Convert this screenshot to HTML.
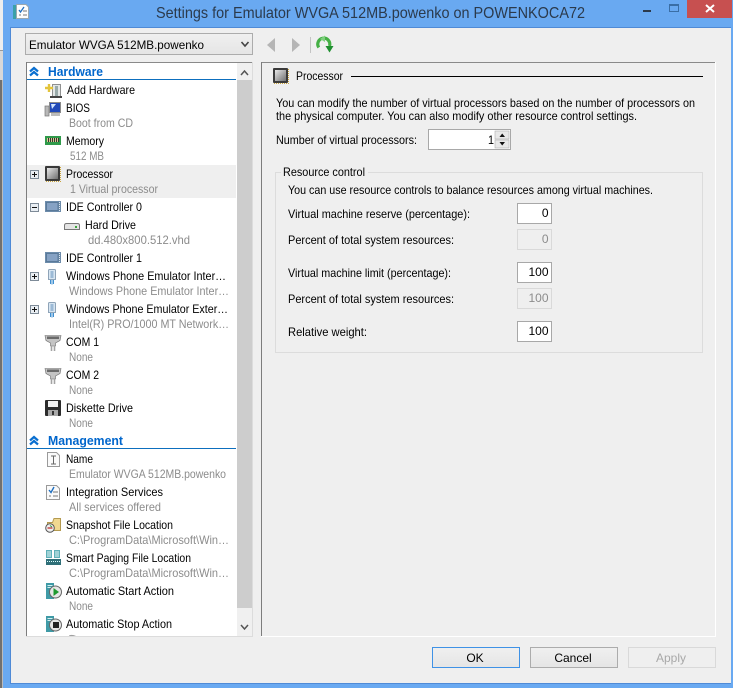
<!DOCTYPE html>
<html><head><meta charset="utf-8"><style>
html,body{margin:0;padding:0;background:#69a9f1;width:733px;height:688px;overflow:hidden}
svg{display:block}
text{font-family:"Liberation Sans",sans-serif;font-size:12px;fill:#000}
.g{fill:#8c8c8c}
.h{font-weight:bold;fill:#0066cc;font-size:12.5px}
.t{font-size:16px;fill:#2b3a4c}
</style></head><body>
<svg width="733" height="688" viewBox="0 0 733 688" xmlns="http://www.w3.org/2000/svg">
<defs>
<linearGradient id="b" x1="0" y1="0" x2="0" y2="1"><stop offset="0" stop-color="#f0f0f0"/><stop offset="1" stop-color="#e5e5e5"/></linearGradient>
<linearGradient id="cpu" x1="0" y1="0" x2="1" y2="1"><stop offset="0" stop-color="#e8e8e8"/><stop offset="1" stop-color="#707070"/></linearGradient>
<symbol id="cpuI" viewBox="0 0 16 16" overflow="visible"><rect x="0" y="0" width="15" height="15" rx="1" fill="#3a3a3a"/><rect x="2" y="2" width="11" height="11" fill="url(#cpu)"/><path d="M15.500 1V15.500H1" fill="none" stroke="#c9a43c" stroke-dasharray="1 1"/></symbol>
<symbol id="ide" viewBox="0 0 16 12" overflow="visible"><rect x="0" y="0" width="16" height="11" fill="#6d8cab"/><rect x="1.500" y="1.500" width="11.500" height="8" fill="#86a2c4" stroke="#5a7a9a"/><path d="M14.500 1V10" stroke="#dfe8f0" stroke-dasharray="1 1"/></symbol>
<symbol id="usb" viewBox="0 0 10 16" overflow="visible"><path d="M1.500 1.500Q1.500 .5 2.500 .5H7.500Q8.500 .5 8.500 1.500V10.500H1.500Z" fill="#d8e6f2" stroke="#8fa4b8"/><rect x="3.500" y="2" width="3" height="7" fill="#9cbad6"/><path d="M3.500 11V15M5 11V15.500M6.500 11V15" stroke="#3f8fd0"/></symbol>
<symbol id="com" viewBox="0 0 16 16" overflow="visible"><path d="M0 .5H16L15 5.500 10.500 8V11H5.500V8L1 5.500Z" fill="#c4c4c4" stroke="#6a6a6a" stroke-width=".6"/><rect x="2" y="1.500" width="12" height="2.500" fill="#6a6a6a"/><path d="M6.500 11V16M9.500 11V16" stroke="#a4a4a4" stroke-width="1.600"/></symbol>
<symbol id="plus" viewBox="0 0 9 9" overflow="visible"><rect x=".5" y=".5" width="8" height="8" fill="#e9eef3" stroke="#7e8b98"/><path d="M2 4.500H7M4.500 2V7" stroke="#111"/></symbol>
<symbol id="chev" viewBox="0 0 10 9" overflow="visible"><path d="M1 4.500 5 1 9 4.500M1 8.500 5 5 9 8.500" fill="none" stroke="#0a6fd0" stroke-width="2.200"/></symbol>
<symbol id="srv" viewBox="0 0 16 16" overflow="visible"><rect x="0" y="0" width="8" height="16" fill="#3f9aa6"/><path d="M1.500 2.500H6.500M1.500 4.500H6.500" stroke="#d4eef0"/><circle cx="9.500" cy="9" r="6" fill="#e6e6e6" stroke="#666"/></symbol>
</defs>

<!-- window chrome -->
<rect width="733" height="688" fill="#69a9f1"/>
<rect x="0" y="0" width="3" height="50" fill="#eeeeee"/>
<rect x="0" y="50" width="3" height="30" fill="#d8d8d8"/>
<rect x="0" y="50" width="3" height="1" fill="#999"/>
<rect x="0" y="80" width="3" height="608" fill="#707070"/>
<rect x="2" y="80" width="1" height="608" fill="#bbb"/>
<rect x="10" y="27" width="721" height="657" fill="#4f8ad6"/>
<rect x="11" y="28" width="720" height="655" fill="#efefef"/>

<!-- app icon -->
<rect x="13" y="5" width="3" height="14" fill="#3aa0a8"/>
<path d="M16.500 4.500H26L28.500 7V18.500H16.500Z" fill="#fdfdfd" stroke="#9aa8b0"/>
<path d="M19 10 20.500 12 24 7" fill="none" stroke="#1f6fc0" stroke-width="1.300"/>
<path d="M19 15H21M23 11H27M23 15H27" stroke="#777"/>

<!-- title -->
<text class="t" x="156" y="18" textLength="429" lengthAdjust="spacingAndGlyphs">Settings for Emulator WVGA 512MB.powenko on POWENKOCA72</text>
<rect x="643" y="10" width="8" height="2" fill="#2b3a4c"/>
<rect x="669.500" y="4.500" width="9" height="7" fill="none" stroke="#3a6ea5"/>
<rect x="669" y="4" width="10" height="2" fill="#3a6ea5"/>
<rect x="687" y="0" width="45" height="18" fill="#c75050"/>
<path d="M706 5 714 12M714 5 706 12" stroke="#fff" stroke-width="2"/>

<!-- combo -->
<rect x="25.500" y="33.500" width="227" height="21" fill="url(#b)" stroke="#acacac"/>
<text x="29" y="49" textLength="175" lengthAdjust="spacingAndGlyphs">Emulator WVGA 512MB.powenko</text>
<path d="M241.500 42 245 46 248.500 42" fill="none" stroke="#444" stroke-width="1.600"/>

<!-- nav -->
<path d="M275 38V52L267 45Z" fill="#b5b5b5"/>
<path d="M292 38V52L300 45Z" fill="#b5b5b5"/>
<rect x="310" y="37" width="1" height="16" fill="#c4c4c4"/>
<path d="M318.800 47.500A6 6 0 1 1 329.500 46" fill="none" stroke="#45b045" stroke-width="3.200"/>
<path d="M325.500 46H333.500L329.500 52.500Z" fill="#1f8f2f"/>
<path d="M320 39 325 35.500V42Z" fill="#7fd07f"/>

<!-- tree panel -->
<rect x="26" y="62" width="227" height="575" fill="#dcdcdc"/>
<rect x="26" y="62" width="226" height="1" fill="#8a8a8a"/>
<rect x="26" y="62" width="1" height="574" fill="#7d7d7d"/>
<rect x="27" y="63" width="225" height="573" fill="#fff"/>
<rect x="237" y="63" width="15" height="573" fill="#f0f0f0"/>
<rect x="237" y="80" width="15" height="528" fill="#cdcdcd"/>
<path d="M241 75 244.500 71 248 75" fill="none" stroke="#555" stroke-width="1.500"/>
<path d="M241 625 244.500 629 248 625" fill="none" stroke="#555" stroke-width="1.500"/>

<rect x="27" y="165" width="209" height="33" fill="#efefef"/>

<use href="#chev" x="29" y="67" width="10" height="9"/>
<text class="h" x="48" y="76" textLength="55" lengthAdjust="spacingAndGlyphs">Hardware</text>
<rect x="27" y="79" width="209" height="1" fill="#0d6fbe"/>

<!-- Add hardware icon -->
<rect x="52.500" y="84.500" width="8" height="12" fill="#e2e6e6" stroke="#777" stroke-width=".8"/>
<rect x="55" y="86" width="3" height="10" fill="#9aa"/>
<rect x="50" y="96" width="12" height="2" fill="#444"/>
<path d="M45 88H53M49 84V92" stroke="#e3c43c" stroke-width="2.400"/>
<text x="67" y="94" textLength="68" lengthAdjust="spacingAndGlyphs">Add Hardware</text>

<!-- BIOS icon -->
<rect x="45" y="106" width="4" height="10" fill="#b8b8b8" stroke="#777" stroke-width=".7"/>
<rect x="49.500" y="102.500" width="11" height="10" fill="#1f48b8" stroke="#8a8a8a"/>
<path d="M51 104H56L52 109Z" fill="#cfe3ff"/>
<rect x="51" y="113" width="9" height="3" fill="#bbb"/>
<text x="66" y="112" textLength="24" lengthAdjust="spacingAndGlyphs">BIOS</text>
<text class="g" x="69" y="127" textLength="64" lengthAdjust="spacingAndGlyphs">Boot from CD</text>

<!-- Memory icon -->
<rect x="45" y="136" width="16" height="9" fill="#2f9a4a"/>
<path d="M47 138H59V142H47Z" fill="#333"/>
<path d="M47.500 138V142M49.500 138V142M51.500 138V142M53.500 138V142M55.500 138V142M57.500 138V142" stroke="#d8c890"/>
<text x="66" y="145" textLength="38" lengthAdjust="spacingAndGlyphs">Memory</text>
<text class="g" x="70" y="160" textLength="34" lengthAdjust="spacingAndGlyphs">512 MB</text>

<use href="#plus" x="30" y="170" width="9" height="9"/>
<use href="#cpuI" x="45" y="166" width="16" height="16"/>
<text x="66" y="178" textLength="47" lengthAdjust="spacingAndGlyphs">Processor</text>
<text class="g" x="70" y="193" textLength="88" lengthAdjust="spacingAndGlyphs">1 Virtual processor</text>

<rect x="30.500" y="203.500" width="8" height="8" fill="#e9eef3" stroke="#7e8b98"/>
<path d="M32 207.500H37" stroke="#111"/>
<use href="#ide" x="45" y="201" width="16" height="12"/>
<text x="66" y="211" textLength="76" lengthAdjust="spacingAndGlyphs">IDE Controller 0</text>

<path d="M64.500 229.500V225.500Q64.500 223.500 66.500 223.500H77.500Q79.500 223.500 79.500 225.500V229.500Z" fill="#e4e4e4" stroke="#777"/>
<rect x="75" y="226" width="2" height="2" fill="#3aa53a"/>
<text x="85" y="229" textLength="51" lengthAdjust="spacingAndGlyphs">Hard Drive</text>
<text class="g" x="88" y="244" textLength="102" lengthAdjust="spacingAndGlyphs">dd.480x800.512.vhd</text>

<use href="#ide" x="45" y="252" width="16" height="12"/>
<text x="66" y="262" textLength="76" lengthAdjust="spacingAndGlyphs">IDE Controller 1</text>

<use href="#plus" x="30" y="272" width="9" height="9"/>
<use href="#usb" x="47" y="269" width="10" height="16"/>
<text x="66" y="280" textLength="160" lengthAdjust="spacingAndGlyphs">Windows Phone Emulator Inter…</text>
<text class="g" x="69" y="295" textLength="160" lengthAdjust="spacingAndGlyphs">Windows Phone Emulator Inter…</text>

<use href="#plus" x="30" y="305" width="9" height="9"/>
<use href="#usb" x="47" y="302" width="10" height="16"/>
<text x="66" y="313" textLength="162" lengthAdjust="spacingAndGlyphs">Windows Phone Emulator Exter…</text>
<text class="g" x="69" y="328" textLength="160" lengthAdjust="spacingAndGlyphs">Intel(R) PRO/1000 MT Network…</text>

<use href="#com" x="45" y="335" width="16" height="16"/>
<text x="66" y="346" textLength="33" lengthAdjust="spacingAndGlyphs">COM 1</text>
<text class="g" x="69" y="361" textLength="24" lengthAdjust="spacingAndGlyphs">None</text>
<use href="#com" x="45" y="368" width="16" height="16"/>
<text x="66" y="379" textLength="33" lengthAdjust="spacingAndGlyphs">COM 2</text>
<text class="g" x="69" y="394" textLength="24" lengthAdjust="spacingAndGlyphs">None</text>

<!-- diskette -->
<rect x="45" y="400" width="16" height="16" rx="1" fill="#2c2c2c"/>
<rect x="48" y="401" width="10" height="6" fill="#f2f2f2"/>
<rect x="48" y="410" width="10" height="6" fill="#a8a8a8"/>
<rect x="52" y="411" width="2" height="4" fill="#333"/>
<text x="66" y="412" textLength="67" lengthAdjust="spacingAndGlyphs">Diskette Drive</text>
<text class="g" x="69" y="427" textLength="24" lengthAdjust="spacingAndGlyphs">None</text>

<use href="#chev" x="29" y="436" width="10" height="9"/>
<text class="h" x="48" y="445" textLength="75" lengthAdjust="spacingAndGlyphs">Management</text>
<rect x="27" y="448" width="209" height="1" fill="#0d6fbe"/>

<!-- name icon -->
<path d="M47.500 452.500H56.500L59.500 455.500V466.500H47.500Z" fill="#fafafa" stroke="#9a9a9a"/>
<path d="M51 456H56M53.500 456V464M51 464H56" stroke="#666" fill="none"/>
<text x="66" y="463" textLength="27" lengthAdjust="spacingAndGlyphs">Name</text>
<text class="g" x="69" y="478" textLength="157" lengthAdjust="spacingAndGlyphs">Emulator WVGA 512MB.powenko</text>

<!-- integration -->
<path d="M46.500 485.500H56.500L59.500 488.500V499.500H46.500Z" fill="#fafafa" stroke="#9a9a9a"/>
<path d="M49 490 51 492.500 54 487" fill="none" stroke="#1f6fc0" stroke-width="1.400"/>
<path d="M49 496H51M53 492H58M53 496H58" stroke="#777"/>
<text x="66" y="496" textLength="97" lengthAdjust="spacingAndGlyphs">Integration Services</text>
<text class="g" x="69" y="511" textLength="92" lengthAdjust="spacingAndGlyphs">All services offered</text>

<!-- snapshot -->
<path d="M47.500 522.500H52.500L54 518.500H60.500V530.500H47.500Z" fill="#f0d890" stroke="#b49a50"/>
<circle cx="50" cy="528" r="4.300" fill="#f0f0f0" stroke="#555"/>
<path d="M47.500 528H52.500" stroke="#c03030" stroke-width="1.300"/>
<path d="M50 525.500 52 527" stroke="#2a9a3a"/>
<text x="66" y="529" textLength="107" lengthAdjust="spacingAndGlyphs">Snapshot File Location</text>
<text class="g" x="69" y="544" textLength="160" lengthAdjust="spacingAndGlyphs">C:\ProgramData\Microsoft\Win…</text>

<!-- smart paging -->
<rect x="46" y="550" width="6" height="8" fill="#5fb0b8"/>
<rect x="54" y="550" width="6" height="8" fill="#5fb0b8"/>
<path d="M47 552H51M47 554H51M47 556H51M55 552H59M55 554H59M55 556H59" stroke="#e0f4f4"/>
<rect x="46" y="559" width="15" height="6" fill="#2f6f78"/>
<path d="M47 561.500H60" stroke="#dff" stroke-dasharray="1 1"/>
<text x="66" y="562" textLength="125" lengthAdjust="spacingAndGlyphs">Smart Paging File Location</text>
<text class="g" x="69" y="577" textLength="160" lengthAdjust="spacingAndGlyphs">C:\ProgramData\Microsoft\Win…</text>

<!-- start -->
<use href="#srv" x="46" y="583" width="16" height="16"/>
<path d="M53.500 588V596L59 592Z" fill="#1f9a2f"/>
<text x="66" y="595" textLength="108" lengthAdjust="spacingAndGlyphs">Automatic Start Action</text>
<text class="g" x="69" y="610" textLength="24" lengthAdjust="spacingAndGlyphs">None</text>

<!-- stop -->
<use href="#srv" x="46" y="616" width="16" height="16"/>
<rect x="53" y="622" width="6" height="6" fill="#222"/>
<text x="66" y="628" textLength="106" lengthAdjust="spacingAndGlyphs">Automatic Stop Action</text>
<path d="M69 636V635.500Q72 634 76 636Z" fill="#a0a0a0"/>

<!-- detail panel -->
<rect x="261" y="62" width="455" height="575" fill="#fff"/>
<rect x="261" y="62" width="454" height="1" fill="#8a8a8a"/>
<rect x="261" y="62" width="1" height="574" fill="#7d7d7d"/>
<rect x="262" y="63" width="453" height="573" fill="#efefef"/>

<use href="#cpuI" x="273" y="68" width="16" height="16"/>
<text x="296" y="80" textLength="47" lengthAdjust="spacingAndGlyphs">Processor</text>
<rect x="351" y="76" width="352" height="1" fill="#000"/>

<text x="276" y="107" textLength="419" lengthAdjust="spacingAndGlyphs">You can modify the number of virtual processors based on the number of processors on</text>
<text x="276" y="120" textLength="361" lengthAdjust="spacingAndGlyphs">the physical computer. You can also modify other resource control settings.</text>
<text x="276" y="144" textLength="141" lengthAdjust="spacingAndGlyphs">Number of virtual processors:</text>

<rect x="428.500" y="129.500" width="82" height="20" fill="#fff" stroke="#a8a8a8"/>
<text x="488" y="144" textLength="6" lengthAdjust="spacingAndGlyphs">1</text>
<rect x="495" y="131" width="14" height="8" fill="#e8e8e8" stroke="#b0b0b0" stroke-width=".6"/>
<rect x="495" y="140" width="14" height="8" fill="#e8e8e8" stroke="#b0b0b0" stroke-width=".6"/>
<path d="M499.500 137H505L502.200 133.500Z" fill="#111"/>
<path d="M499.500 142H505L502.200 145.500Z" fill="#111"/>

<rect x="275.500" y="172.500" width="427" height="180" fill="none" stroke="#dcdcdc"/>
<rect x="281" y="168" width="87" height="9" fill="#efefef"/>
<text x="283" y="176" textLength="82" lengthAdjust="spacingAndGlyphs">Resource control</text>
<text x="288" y="194" textLength="365" lengthAdjust="spacingAndGlyphs">You can use resource controls to balance resources among virtual machines.</text>

<text x="288" y="218" textLength="182" lengthAdjust="spacingAndGlyphs">Virtual machine reserve (percentage):</text>
<text x="288" y="244" textLength="166" lengthAdjust="spacingAndGlyphs">Percent of total system resources:</text>
<text x="288" y="277" textLength="163" lengthAdjust="spacingAndGlyphs">Virtual machine limit (percentage):</text>
<text x="288" y="303" textLength="166" lengthAdjust="spacingAndGlyphs">Percent of total system resources:</text>
<text x="288" y="336" textLength="79" lengthAdjust="spacingAndGlyphs">Relative weight:</text>

<rect x="517.500" y="203.500" width="34" height="20" fill="#fff" stroke="#a8a8a8"/>
<text x="548.500" y="217" text-anchor="end">0</text>
<rect x="517.500" y="229.500" width="34" height="20" fill="#efefef" stroke="#d9d9d9"/>
<text class="g" x="548.500" y="243" text-anchor="end">0</text>
<rect x="517.500" y="262.500" width="34" height="20" fill="#fff" stroke="#a8a8a8"/>
<text x="548.500" y="276" text-anchor="end">100</text>
<rect x="517.500" y="288.500" width="34" height="20" fill="#efefef" stroke="#d9d9d9"/>
<text class="g" x="548.500" y="302" text-anchor="end">100</text>
<rect x="517.500" y="321.500" width="34" height="20" fill="#fff" stroke="#a8a8a8"/>
<text x="548.500" y="335" text-anchor="end">100</text>

<!-- buttons -->
<rect x="432.500" y="647.500" width="87" height="20" fill="url(#b)" stroke="#3f92e6"/>
<text x="475" y="662" text-anchor="middle">OK</text>
<rect x="530.500" y="647.500" width="87" height="20" fill="url(#b)" stroke="#acacac"/>
<text x="573" y="662" text-anchor="middle">Cancel</text>
<rect x="628.500" y="647.500" width="87" height="20" fill="#efefef" stroke="#d9d9d9"/>
<text x="671" y="662" text-anchor="middle" style="fill:#a8a8a8">Apply</text>
</svg>
</body></html>
